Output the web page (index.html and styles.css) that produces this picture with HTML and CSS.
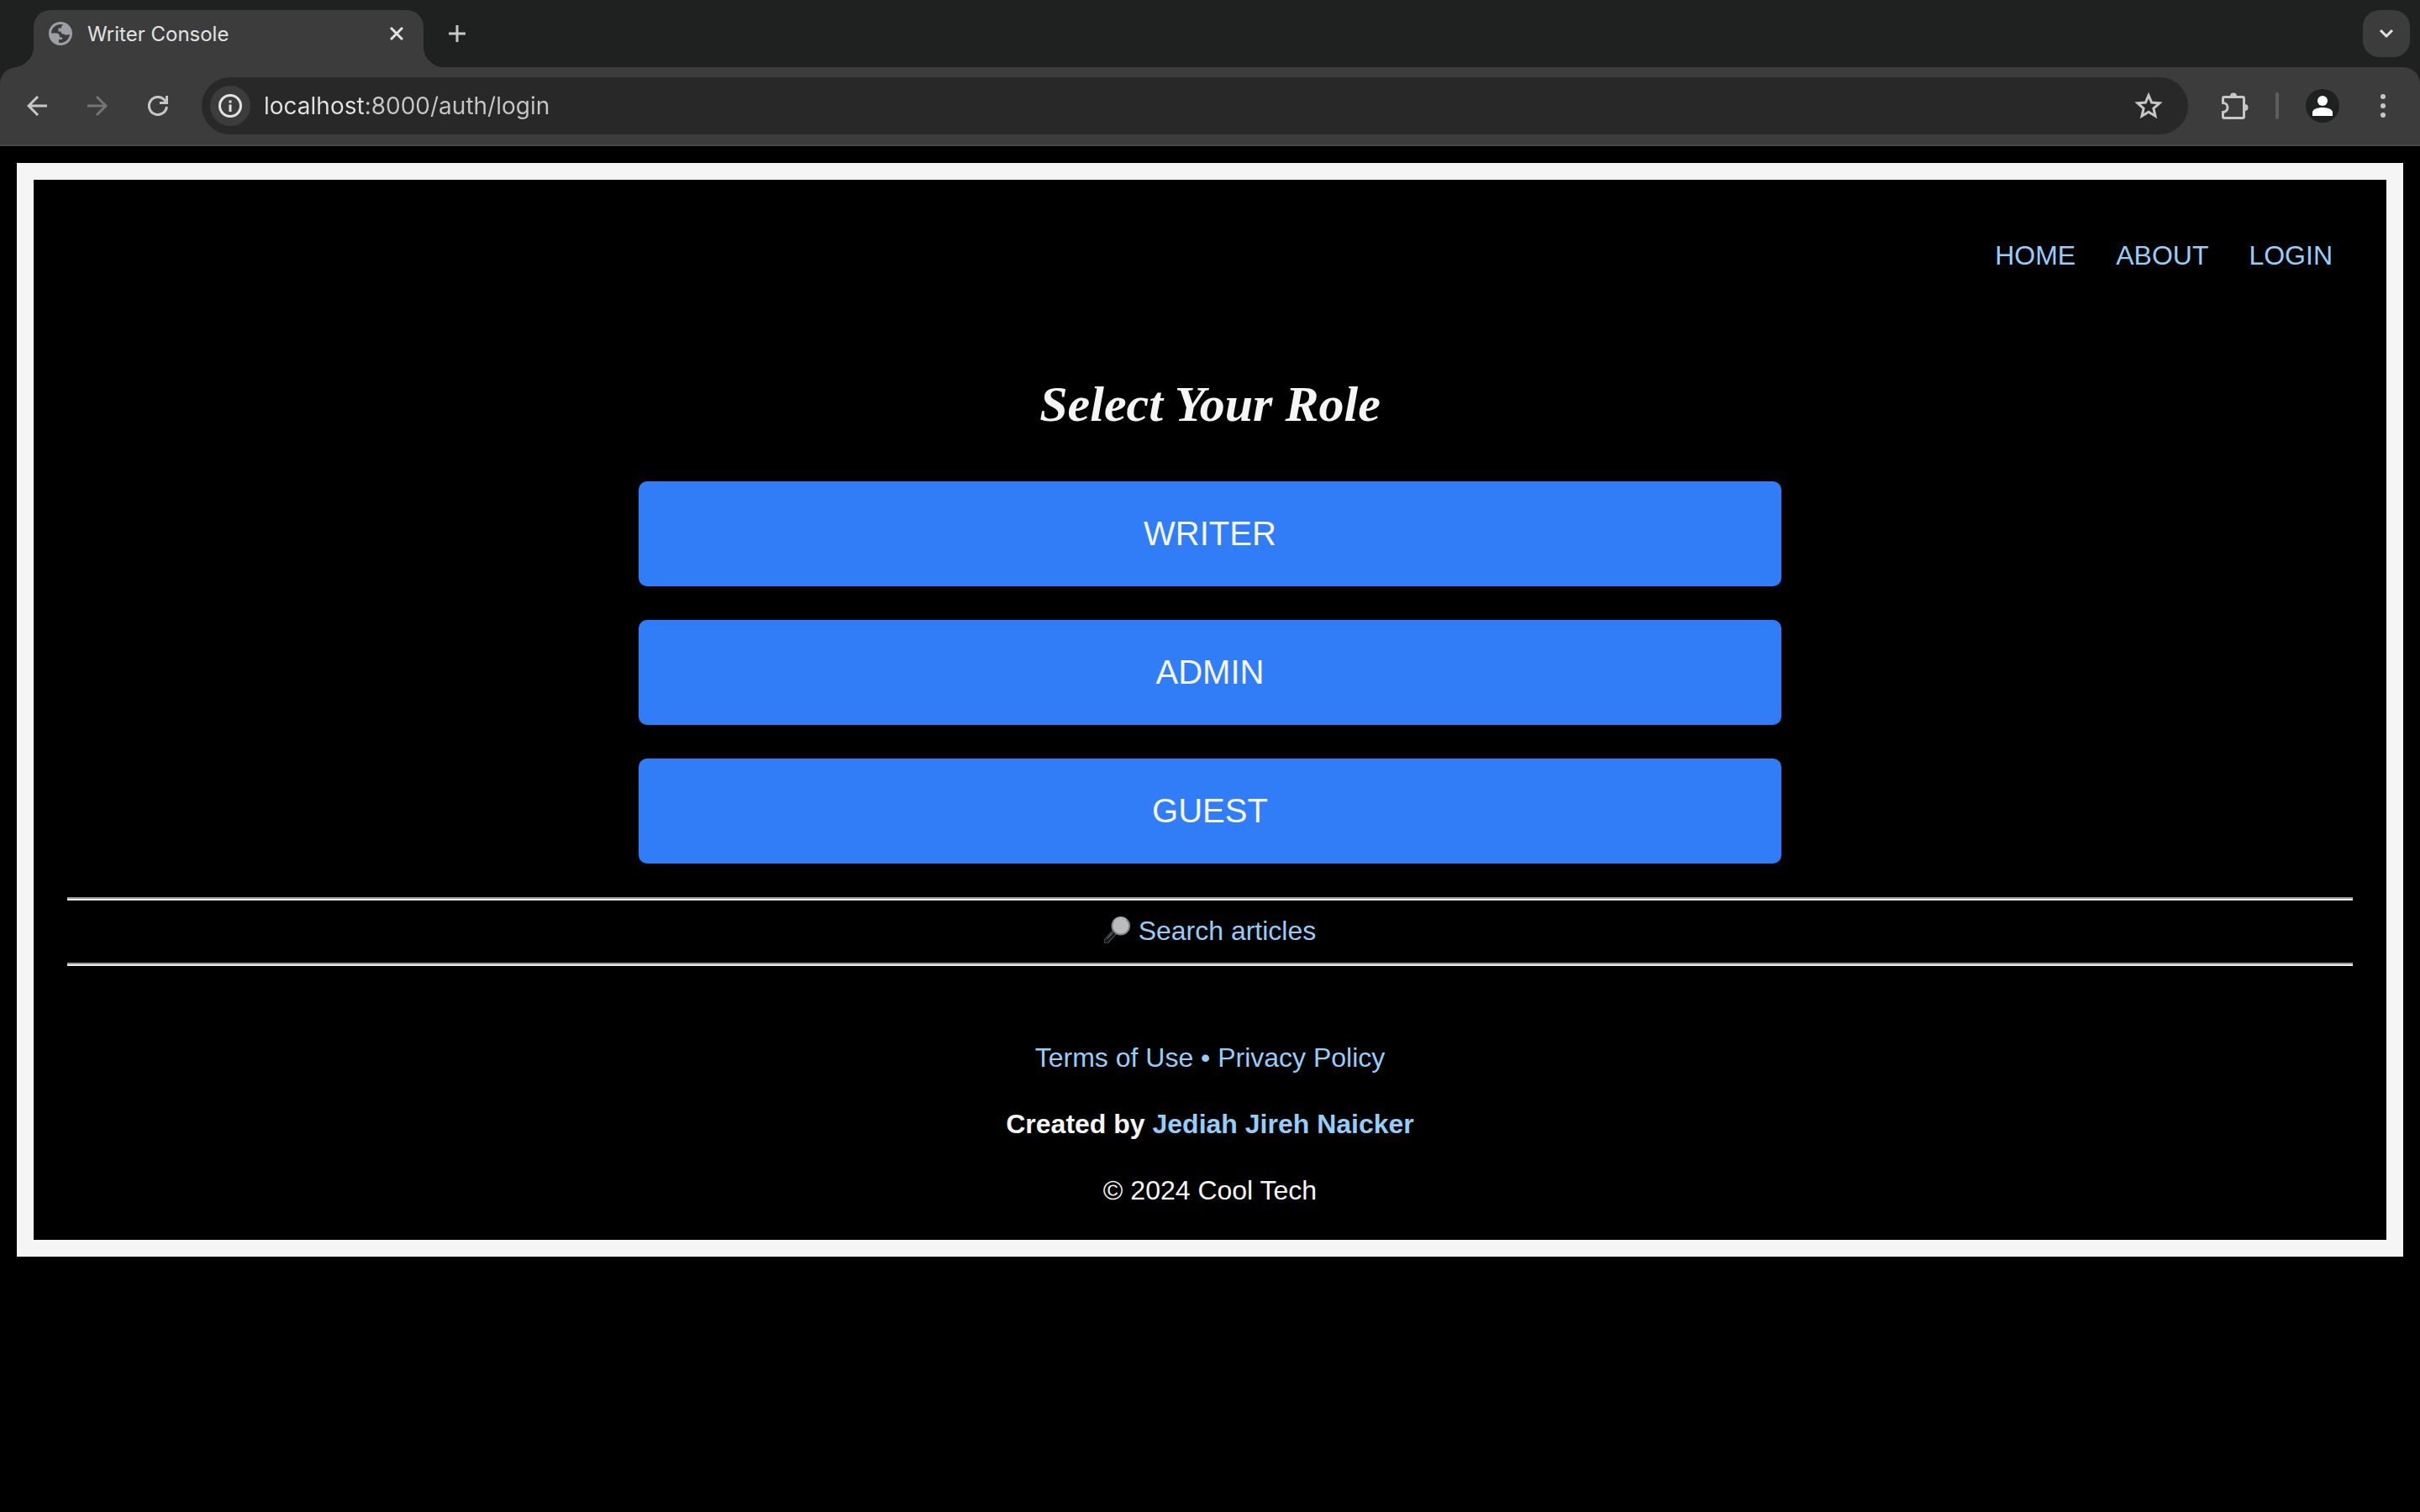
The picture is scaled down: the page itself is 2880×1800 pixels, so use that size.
FILE: index.html
```html
<!DOCTYPE html>
<html lang="en">
<head>
<meta charset="utf-8">
<title>Writer Console</title>
<link rel="stylesheet" href="styles.css">
</head>
<body>
<header class="browser">
  <div class="tab-strip">
    <div class="tab">
      <svg class="favicon" viewBox="0 0 28 28" aria-hidden="true">
        <circle cx="14" cy="14" r="14" fill="#9aa0a6"/>
        <path d="M17 3.400C9.600 1.800 3.200 6.800 3 13.600H9C11.500 13.600 13 15 13 17.500V18.500H16V21H12V25C18.500 25.800 24.500 21.500 25 14.500C23 16 19.500 16.200 18.200 14.500C16.500 14.800 14.500 14 14.500 11.500H11.500V7.500H15V5.500Z" fill="#3c3c3c"/>
      </svg>
      <span class="tab-title">Writer Console</span>
      <button class="icon-button tab-close" aria-label="Close tab">
        <svg width="16" height="16" viewBox="0 0 16 16"><path d="M1 1L15 15M15 1L1 15" stroke="#e3e3e3" stroke-width="3"/></svg>
      </button>
    </div>
    <button class="icon-button" aria-label="New tab">
      <svg width="20" height="20" viewBox="0 0 20 20"><path d="M10 0V20M0 10H20" stroke="#c7c7c7" stroke-width="3"/></svg>
    </button>
    <button class="icon-button tab-search" aria-label="Search tabs">
      <svg width="18" height="12" viewBox="0 0 18 12"><path d="M2 2L9 9L16 2" fill="none" stroke="#e3e3e3" stroke-width="3"/></svg>
    </button>
  </div>
  <div class="toolbar">
    <div class="history">
      <button class="icon-button" aria-label="Back">
        <svg width="24" height="24" viewBox="0 0 24 24"><path d="M24 12H2M13 1L2 12L13 23" fill="none" stroke="#c7c7c7" stroke-width="3"/></svg>
      </button>
      <button class="icon-button" aria-label="Forward" disabled>
        <svg width="24" height="24" viewBox="0 0 24 24"><path d="M0 12H22M11 1L22 12L11 23" fill="none" stroke="#757575" stroke-width="3"/></svg>
      </button>
      <button class="icon-button" aria-label="Reload">
        <svg width="24" height="24" viewBox="0 0 24 24"><path d="M22.400 13A10.500 10.500 0 1 1 19.500 4.700L22 8M22.500 0V8.500H14" fill="none" stroke="#c7c7c7" stroke-width="3"/></svg>
      </button>
    </div>
    <div class="omnibox">
      <button class="icon-button site-info" aria-label="View site information">
        <svg width="28" height="28" viewBox="0 0 28 28"><circle cx="14" cy="14" r="12.500" fill="none" stroke="#e3e3e3" stroke-width="3"/><path d="M14 12.500V21M14 7.500V10.500" stroke="#e3e3e3" stroke-width="3"/></svg>
      </button>
      <input class="address" type="text" aria-label="Address" value="localhost:8000/auth/login">
      <button class="icon-button" aria-label="Bookmark this tab">
        <svg width="34" height="32" viewBox="0 0 34 32"><path d="M17 3.500L20.600 12L30 12.800L22.900 19L25 28.200L17 23.300L9 28.200L11.100 19L4 12.800L13.400 12Z" fill="none" stroke="#c7c7c7" stroke-width="3"/></svg>
      </button>
    </div>
    <div class="actions">
      <button class="icon-button" aria-label="Extensions">
        <svg width="32" height="32" viewBox="0 0 32 32"><path d="M1.500 7Q1.500 5.500 3 5.500H25Q26.500 5.500 26.500 7V29Q26.500 30.500 25 30.500H3Q1.500 30.500 1.500 29V23.500A5.500 5.500 0 0 0 1.500 12.500Z" fill="none" stroke="#c7c7c7" stroke-width="3"/><path d="M10 4.500A4 4 0 0 1 18 4.500ZM27.500 14A4 4 0 0 1 27.500 22Z" fill="#c7c7c7"/></svg>
      </button>
      <span class="divider"></span>
      <button class="icon-button" aria-label="Profile">
        <svg width="40" height="40" viewBox="0 0 40 40"><circle cx="20" cy="20" r="20" fill="#1f2120"/><circle cx="20" cy="14" r="6" fill="#fff"/><path d="M8 32V28C8 24 14 22 20 22S32 24 32 28V32Z" fill="#fff"/></svg>
      </button>
      <button class="icon-button menu" aria-label="Menu">
        <svg width="8" height="28" viewBox="0 0 8 28"><g fill="#c7c7c7"><circle cx="4" cy="3" r="3"/><circle cx="4" cy="14" r="3"/><circle cx="4" cy="25" r="3"/></g></svg>
      </button>
    </div>
  </div>
</header>
<div class="frame">
  <nav class="site-nav">
    <a href="#home">HOME</a>
    <a href="#about">ABOUT</a>
    <a href="#login">LOGIN</a>
  </nav>
  <main class="roles">
    <h1>Select Your Role</h1>
    <button class="role">WRITER</button>
    <button class="role">ADMIN</button>
    <button class="role">GUEST</button>
  </main>
  <div class="search">
    <a href="#search"><svg class="lens" viewBox="0 0 34 34" aria-hidden="true">
      <path d="M3 31L13 20" stroke="#55585c" stroke-width="7" stroke-linecap="round"/>
      <path d="M3 31L13 20" stroke="#17191b" stroke-width="5" stroke-linecap="round"/>
      <path d="M4 28L11 20.500" stroke="#8b8f94" stroke-width="1"/>
      <circle cx="21" cy="12" r="11" fill="#bcbcbc" stroke="#7e8189" stroke-width="2"/>
      <path d="M12 6A11 11 0 0 1 28 4" fill="none" stroke="#c9d2e4" stroke-width="1"/>
    </svg> Search articles</a>
  </div>
  <footer class="footer">
    <p><a href="#terms">Terms of Use</a> <span class="dot">•</span> <a href="#privacy">Privacy Policy</a></p>
    <p><strong>Created by <a href="#author">Jediah Jireh Naicker</a></strong></p>
    <p>© 2024 Cool Tech</p>
  </footer>
</div>
</body>
</html>
```
FILE: styles.css
```css
* {
  box-sizing: border-box;
}

body {
  margin: 0;
  background: #000;
  color: #f5f5f5;
  font: 32px/37px "Liberation Sans", Arial, sans-serif;
}

button {
  border: 0;
  padding: 0;
  cursor: pointer;
}

a {
  color: #96cdf8;
  text-decoration: none;
}

/* Browser window */
.browser {
  background: #1f2120;
  font-family: Inter, sans-serif;
}

.tab-strip {
  display: flex;
  align-items: center;
  gap: 30px;
  height: 80px;
  padding: 0 12px 0 40px;
}

.tab {
  position: relative;
  display: flex;
  align-items: center;
  align-self: flex-end;
  width: 464px;
  height: 68px;
  padding: 0 24px 12px 18px;
  border-radius: 20px 20px 0 0;
  background: #3c3c3c;
}

/* Flared feet of the active tab */
.tab::before,
.tab::after {
  content: "";
  position: absolute;
  bottom: 0;
  width: 24px;
  height: 24px;
}

.tab::before {
  right: 100%;
  background: radial-gradient(circle at 0 0, transparent 24px, #3c3c3c 24px);
}

.tab::after {
  left: 100%;
  background: radial-gradient(circle at 100% 0, transparent 24px, #3c3c3c 24px);
}

.favicon {
  width: 28px;
  height: 28px;
}

.tab-title {
  flex: 1;
  margin-left: 18px;
  color: #e3e3e3;
  font-size: 24px;
}

.icon-button {
  display: flex;
  align-items: center;
  justify-content: center;
  flex: none;
  background: none;
}

.tab-search {
  width: 56px;
  height: 56px;
  margin-left: auto;
  border-radius: 20px;
  background: #3c3c3c;
}

.toolbar {
  display: flex;
  align-items: center;
  gap: 40px;
  height: 94px;
  padding: 0 40px 0 32px;
  border-bottom: 2px solid #474747;
  border-radius: 20px 20px 0 0;
  background: #3c3c3c;
}

.history {
  display: flex;
  gap: 48px;
}

.actions {
  display: flex;
  align-items: center;
  gap: 32px;
}

.menu {
  margin-left: 16px;
}

.omnibox {
  display: flex;
  align-items: center;
  flex: 1;
  height: 68px;
  padding: 0 30px 0 10px;
  border-radius: 34px;
  background: #282828;
}

.site-info {
  width: 48px;
  height: 48px;
  border-radius: 24px;
  background: #3c3c3c;
}

.address {
  flex: 1;
  min-width: 0;
  margin-left: 16px;
  padding: 0;
  border: 0;
  outline: 0;
  background: linear-gradient(90deg, #e3e3e3 120px, #c7c7c7 120px);
  background-clip: text;
  color: transparent;
  font: 28px/34px Inter, sans-serif;
}

.divider {
  width: 4px;
  height: 32px;
  border-radius: 2px;
  background: #5e5e5e;
}

/* Page */
.frame {
  margin: 20px;
  padding: 40px;
  border: 20px solid #f5f5f5;
}

.site-nav {
  display: flex;
  justify-content: flex-end;
  gap: 48px;
  padding: 32px 24px;
}

.roles {
  display: flex;
  flex-direction: column;
  align-items: center;
  gap: 40px;
}

h1 {
  margin: 86px 0 12px;
  font: italic bold 60px/80px "Apple Chancery", "URW Chancery L", Z003, "Liberation Serif", serif;
}

.role {
  width: 50%;
  padding: 40px;
  border-radius: 10px;
  background: #317df8;
  color: #f5f5f5;
  font: 40px/45px "Liberation Sans", Arial, sans-serif;
}

.search {
  margin-top: 40px;
  border: solid #9a9a9a;
  border-width: 2px 0;
  box-shadow: inset 0 2px #eee, 0 2px #eee;
  line-height: 76px;
  text-align: center;
}

.lens {
  width: 32px;
  height: 32px;
  vertical-align: -4px;
}

.footer {
  display: flex;
  flex-direction: column;
  gap: 42px;
  margin-top: 93px;
  text-align: center;
}

.footer p {
  margin: 0;
}

.dot {
  color: #96cdf8;
}
```
